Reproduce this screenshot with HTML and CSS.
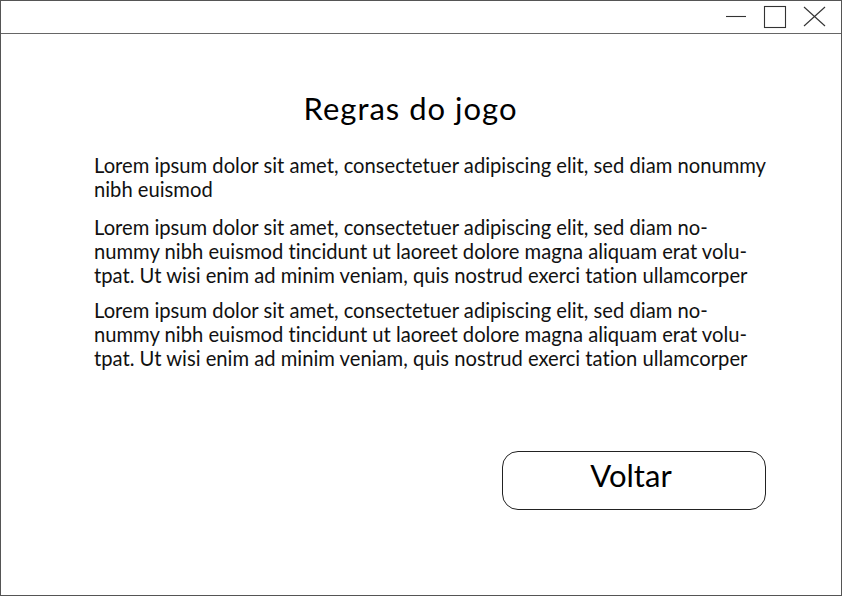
FILE: index.html
```html
<!DOCTYPE html>
<html lang="pt">
<head>
<meta charset="utf-8">
<title>Regras do jogo</title>
<link rel="stylesheet" href="styles.css">
</head>
<body>
<div class="window">
  <header class="titlebar">
    <svg class="controls" width="110" height="32" viewBox="0 0 110 32" aria-hidden="true">
      <line x1="5" y1="15.5" x2="25" y2="15.5" class="ctl"/>
      <rect x="43.5" y="5.5" width="21" height="21" class="ctl"/>
      <line x1="83" y1="6" x2="104" y2="25" class="ctl"/>
      <line x1="104" y1="6" x2="83" y2="25" class="ctl"/>
    </svg>
  </header>
  <main class="content">
    <h1 class="title">Regras do jogo</h1>
    <p class="para">Lorem ipsum dolor sit amet, consectetuer adipiscing elit, sed diam nonummy<br>nibh euismod</p>
    <p class="para gap-lg">Lorem ipsum dolor sit amet, consectetuer adipiscing elit, sed diam no-<br>nummy nibh euismod tincidunt ut laoreet dolore magna aliquam erat volu-<br>tpat. Ut wisi enim ad minim veniam, quis nostrud exerci tation ullamcorper</p>
    <p class="para gap-sm">Lorem ipsum dolor sit amet, consectetuer adipiscing elit, sed diam no-<br>nummy nibh euismod tincidunt ut laoreet dolore magna aliquam erat volu-<br>tpat. Ut wisi enim ad minim veniam, quis nostrud exerci tation ullamcorper</p>
    <div class="actions">
      <button class="btn" type="button">Voltar</button>
    </div>
  </main>
</div>
</body>
</html>
```

FILE: styles.css
```css
* { box-sizing: border-box; }
html, body { margin: 0; padding: 0; background: #fff; }
body {
  font-family: Lato, "Open Sans", "Liberation Sans", sans-serif;
  font-variant-ligatures: none;
  color: #111;
}
.window {
  width: 842px;
  height: 596px;
  border: 1px solid #555;
  display: flex;
  flex-direction: column;
  background: #fff;
}
.titlebar {
  height: 33px;
  border-bottom: 1px solid #666;
  display: flex;
  justify-content: flex-end;
  padding-right: 10px;
}
.controls { display: block; }
.ctl {
  fill: none;
  stroke: #333;
  stroke-width: 1.1;
}
.content {
  padding: 56px 75px 0 93px;
}
.title {
  margin: 0;
  padding-right: 39px;
  text-align: center;
  font-weight: 400;
  font-size: 31px;
  letter-spacing: 1px;
  line-height: 36px;
  color: #000;
}
.para {
  margin: 27px 0 0;
  font-size: 20.2px;
  line-height: 24px;
  white-space: nowrap;
  color: #111;
}
.para.gap-lg { margin-top: 14px; }
.para.gap-sm { margin-top: 11px; }
.actions {
  display: flex;
  justify-content: flex-end;
  margin-top: 81px;
}
.btn {
  width: 264px;
  height: 59px;
  border: 1px solid #222;
  border-radius: 16px;
  background: #fff;
  font-family: inherit;
  font-size: 31px;
  line-height: 37px;
  padding: 0 6px 10px 0;
  color: #000;
}
```
